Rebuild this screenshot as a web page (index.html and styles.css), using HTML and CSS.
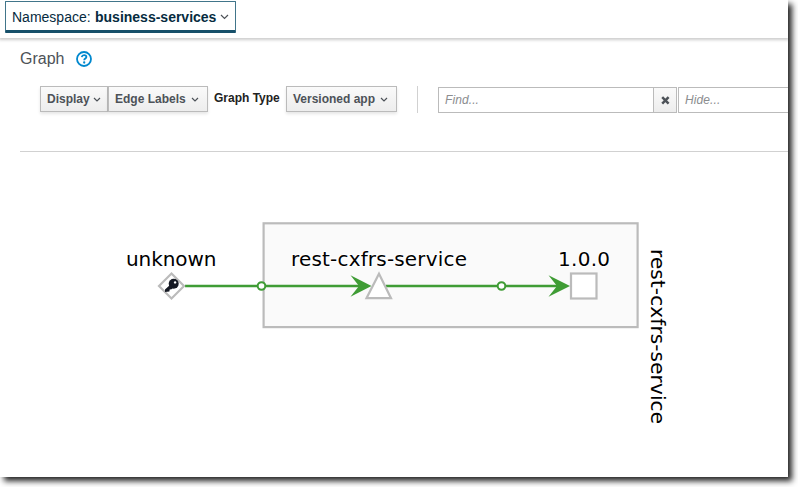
FILE: index.html
```
<!DOCTYPE html>
<html lang="en">
<head>
<meta charset="utf-8">
<title>Graph</title>
<link rel="stylesheet" href="styles.css">
</head>
<body>
<div class="window">
  <header class="masthead">
    <button class="namespace"><span class="ns-label">Namespace:</span><b>business-services</b>
      <svg class="chevron" width="9" height="6" viewBox="0 0 9 6"><path d="M1 1l3.5 3.5L8 1"/></svg>
    </button>
  </header>
  <main>
    <div class="title"><h1>Graph</h1>
      <svg width="16" height="16" viewBox="0 0 16 16"><circle cx="8" cy="8" r="7" fill="none" stroke="#0088ce" stroke-width="1.8"/><path d="M5.7 6.1C6 4.8 7 4.2 8.1 4.2c1.3 0 2.3.8 2.3 1.9 0 1.5-2.2 1.5-2.2 3.1" fill="none" stroke="#0088ce" stroke-width="1.8"/><circle cx="8.2" cy="11.5" r="1.15" fill="#0088ce"/></svg>
    </div>
    <div class="toolbar">
      <button class="btn display"><span>Display</span><svg class="chevron" width="8" height="5" viewBox="0 0 8 5"><path d="M1 1l3 3 3-3"/></svg></button>
      <button class="btn edges"><span>Edge Labels</span><svg class="chevron" width="8" height="5" viewBox="0 0 8 5"><path d="M1 1l3 3 3-3"/></svg></button>
      <span class="type-label">Graph Type</span>
      <button class="btn version"><span>Versioned app</span><svg class="chevron" width="8" height="5" viewBox="0 0 8 5"><path d="M1 1l3 3 3-3"/></svg></button>
      <i class="divider"></i>
      <div class="field find">Find...</div>
      <button class="clear"><svg width="9" height="9" viewBox="0 0 9 9"><path d="M1.2 1.2l6.4 6.4M7.6 1.2L1.2 7.6"/></svg></button>
      <div class="field hide">Hide...</div>
    </div>
  </main>
  <svg class="graph" width="788" height="325" viewBox="0 152 788 325">
    <rect class="shape group" x="263.6" y="223.3" width="374" height="103.8"/>
    <path class="edge" d="M185 286H362M386 286H562"/>
    <path class="arrow" d="M350.5 275.200L371.5 286L350.5 296.800L359 286Z"/>
    <path class="arrow" d="M548.5 275.200L570 286L548.5 296.800L557 286Z"/>
    <circle class="port" cx="261.5" cy="286" r="3.8"/>
    <circle class="port" cx="501.5" cy="286" r="3.8"/>
    <path class="shape" d="M171.5 273.5L184 286L171.5 298.5L159 286Z"/>
    <path class="shape" d="M379 273.8L391 298.2H366.5Z"/>
    <rect class="shape" x="571" y="273.5" width="25.5" height="25"/>
    <circle cx="173.7" cy="283.8" r="5" fill="#151923"/>
    <path d="M170 285L165 289.5V292L169.4 291.5L169.7 289.6L171.5 289.3L174 287Z" fill="#151923"/>
    <circle cx="175.1" cy="282.4" r="1.2" fill="#fff"/>
    <text class="label" x="126" y="266" textLength="90.5">unknown</text>
    <text class="label" x="291" y="266" textLength="176">rest-cxfrs-service</text>
    <text class="label" x="558" y="266" textLength="52">1.0.0</text>
    <text class="label" transform="translate(651 249) rotate(90)" textLength="175">rest-cxfrs-service</text>
  </svg>
</div>
</body>
</html>
```
FILE: styles.css
```
* { box-sizing: border-box; }
html { height: 487px; }
body { margin: 0; height: 487px; background: #fff; overflow: hidden; font: 12px "Liberation Sans", Arial, sans-serif; color: #222; }
button { font: inherit; margin: 0; padding: 0; }
.window { display: flex; flex-direction: column; width: 788px; height: 477px; background: #fff; overflow: hidden; box-shadow: 4px 4px 6px #222; }
.masthead { flex: none; height: 38px; padding: 1px 0 0 5px; box-shadow: 0 1px 3px 1px #ccc; }
.namespace { display: flex; align-items: center; width: 231px; height: 32px; padding: 1px 0 0 6px; background: #fff; border: 1px solid #41758a; border-bottom: 3px solid #17506a; border-radius: 1px; font-size: 14px; color: #062b40; white-space: nowrap; }
.ns-label { width: 83px; text-align: left; }
.namespace b { width: 122px; text-align: left; }
.namespace .chevron { margin-left: 3px; }
.chevron { flex: none; fill: none; stroke: #4d5258; stroke-width: 1.2; }
main { flex: none; height: 114px; margin-left: 20px; border-bottom: 1px solid #d1d1d1; }
.title { display: flex; align-items: center; height: 18px; margin-top: 12px; gap: 12px; }
h1 { margin: 0; width: 44px; font-size: 16px; font-weight: 400; color: #4d5258; }
.toolbar { display: flex; align-items: flex-start; margin: 18px 0 0 20px; }
.btn { display: flex; flex: none; align-items: center; justify-content: space-between; height: 26px; padding: 0 6px; border: 1px solid #bbb; background: linear-gradient(#fafafa, #ededed); box-shadow: 0 2px 3px rgba(0,0,0,.1); font-size: 12px; font-weight: 700; color: #4d5258; white-space: nowrap; }
.display { width: 68px; }
.edges { width: 100px; padding-right: 8px; }
.version { width: 111px; padding-right: 8px; }
.type-label { flex: none; width: 78px; padding: 5px 0 0 6px; font-weight: 700; line-height: 14px; white-space: nowrap; }
.divider { flex: none; width: 1px; height: 27px; margin: 0 20px; background: #d1d1d1; }
.field { flex: none; height: 26px; margin-top: 1px; padding: 0 6px; border: 1px solid #bbb; font-style: italic; line-height: 24px; letter-spacing: .1px; color: #8b8d8f; }
.find { width: 216px; }
.clear { display: flex; flex: none; align-items: center; justify-content: center; width: 23px; height: 26px; margin: 1px 1px 0 0; border: 1px solid #bbb; border-left: 0; background: linear-gradient(#fafafa, #ededed); }
.clear path { stroke: #4d5258; stroke-width: 2.5; }
.hide { width: 140px; }
.graph { display: block; flex: none; }
.shape { fill: #fff; stroke: #bbb; stroke-width: 2.2; }
.group { fill: #fafafa; }
.edge { fill: none; stroke: #3f9c35; stroke-width: 2.5; }
.arrow { fill: #3f9c35; }
.port { fill: #fff; stroke: #3f9c35; stroke-width: 2; }
.label { font: 20px "DejaVu Sans", Verdana, sans-serif; fill: #000; stroke: #fff; stroke-width: 2px; paint-order: stroke; }
```
